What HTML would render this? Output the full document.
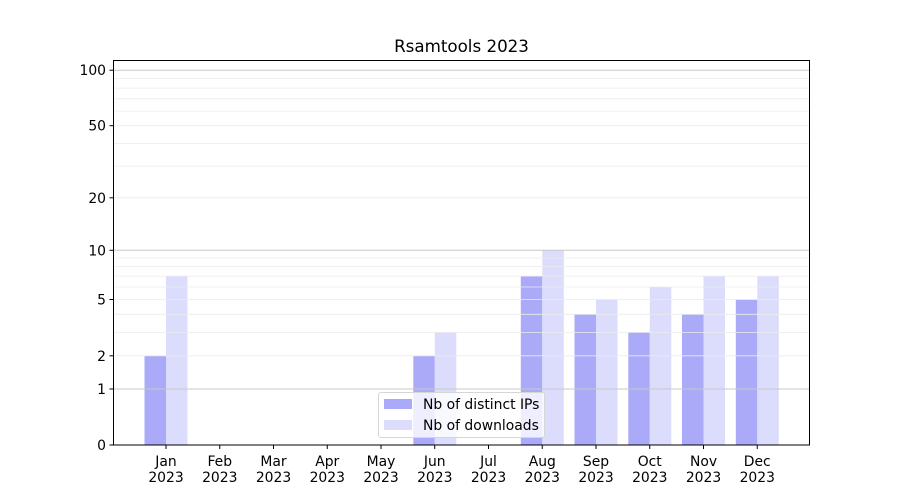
<!DOCTYPE html>
<html><head><meta charset="utf-8"><style>
html,body{margin:0;padding:0;background:#fff;}
svg{display:block;font-family:"DejaVu Sans","Liberation Sans",sans-serif;}
</style></head><body>
<svg width="900" height="500" viewBox="0 0 900 500" xmlns="http://www.w3.org/2000/svg">
<rect width="900" height="500" fill="#fff"/>
<!-- bars -->
<g>
<rect x="144.5" y="355.8" width="21.5" height="89.2" fill="#aaaaf9"/>
<rect x="166" y="276.1" width="21.5" height="168.9" fill="#dcdcfc"/>
<rect x="413.3" y="355.8" width="21.5" height="89.2" fill="#aaaaf9"/>
<rect x="434.8" y="332.4" width="21.5" height="112.6" fill="#dcdcfc"/>
<rect x="520.8" y="276.1" width="21.5" height="168.9" fill="#aaaaf9"/>
<rect x="542.3" y="250.3" width="21.5" height="194.7" fill="#dcdcfc"/>
<rect x="574.5" y="314.3" width="21.5" height="130.7" fill="#aaaaf9"/>
<rect x="596" y="299.5" width="21.5" height="145.5" fill="#dcdcfc"/>
<rect x="628.3" y="332.4" width="21.5" height="112.6" fill="#aaaaf9"/>
<rect x="649.8" y="287" width="21.5" height="158" fill="#dcdcfc"/>
<rect x="682" y="314.3" width="21.5" height="130.7" fill="#aaaaf9"/>
<rect x="703.5" y="276.1" width="21.5" height="168.9" fill="#dcdcfc"/>
<rect x="735.8" y="299.5" width="21.5" height="145.5" fill="#aaaaf9"/>
<rect x="757.3" y="276.1" width="21.5" height="168.9" fill="#dcdcfc"/>
</g>
<!-- minor grid -->
<g stroke="#ebebeb" stroke-width="0.8">
<line x1="113" x2="810" y1="355.8" y2="355.8"/>
<line x1="113" x2="810" y1="332.4" y2="332.4"/>
<line x1="113" x2="810" y1="314.3" y2="314.3"/>
<line x1="113" x2="810" y1="299.5" y2="299.5"/>
<line x1="113" x2="810" y1="287" y2="287"/>
<line x1="113" x2="810" y1="276.1" y2="276.1"/>
<line x1="113" x2="810" y1="266.6" y2="266.6"/>
<line x1="113" x2="810" y1="258" y2="258"/>
<line x1="113" x2="810" y1="197.8" y2="197.8"/>
<line x1="113" x2="810" y1="166.1" y2="166.1"/>
<line x1="113" x2="810" y1="143.4" y2="143.4"/>
<line x1="113" x2="810" y1="125.7" y2="125.7"/>
<line x1="113" x2="810" y1="111.1" y2="111.1"/>
<line x1="113" x2="810" y1="98.8" y2="98.8"/>
<line x1="113" x2="810" y1="88.1" y2="88.1"/>
<line x1="113" x2="810" y1="78.6" y2="78.6"/>
</g>
<!-- major grid -->
<g stroke="#c8c8c8" stroke-width="1">
<line x1="113" x2="810" y1="389" y2="389"/>
<line x1="113" x2="810" y1="250.3" y2="250.3"/>
<line x1="113" x2="810" y1="70.2" y2="70.2"/>
</g>
<!-- axes -->
<rect x="113.5" y="60.5" width="696" height="384.5" fill="none" stroke="#000" stroke-width="1"/>
<!-- y ticks -->
<g stroke="#000" stroke-width="1">
<line x1="109.5" x2="113" y1="445" y2="445"/>
<line x1="109.5" x2="113" y1="389" y2="389"/>
<line x1="109.5" x2="113" y1="355.8" y2="355.8"/>
<line x1="109.5" x2="113" y1="299.5" y2="299.5"/>
<line x1="109.5" x2="113" y1="250.3" y2="250.3"/>
<line x1="109.5" x2="113" y1="197.8" y2="197.8"/>
<line x1="109.5" x2="113" y1="125.7" y2="125.7"/>
<line x1="109.5" x2="113" y1="70.2" y2="70.2"/>
</g>
<g font-size="13.9" fill="#000" text-anchor="end">
<text x="106" y="450">0</text>
<text x="106" y="394">1</text>
<text x="106" y="361">2</text>
<text x="106" y="304.5">5</text>
<text x="106" y="255.3">10</text>
<text x="106" y="202.8">20</text>
<text x="106" y="130.7">50</text>
<text x="106" y="75.2">100</text>
</g>
<!-- x ticks -->
<g stroke="#000" stroke-width="1">
<line x1="166" x2="166" y1="445" y2="449"/>
<line x1="219.75" x2="219.75" y1="445" y2="449"/>
<line x1="273.5" x2="273.5" y1="445" y2="449"/>
<line x1="327.25" x2="327.25" y1="445" y2="449"/>
<line x1="381" x2="381" y1="445" y2="449"/>
<line x1="434.75" x2="434.75" y1="445" y2="449"/>
<line x1="488.5" x2="488.5" y1="445" y2="449"/>
<line x1="542.25" x2="542.25" y1="445" y2="449"/>
<line x1="596" x2="596" y1="445" y2="449"/>
<line x1="649.75" x2="649.75" y1="445" y2="449"/>
<line x1="703.5" x2="703.5" y1="445" y2="449"/>
<line x1="757.25" x2="757.25" y1="445" y2="449"/>
</g>
<g font-size="13.9" fill="#000" text-anchor="middle">
<text x="166" y="466">Jan</text><text x="166" y="482">2023</text>
<text x="219.75" y="466">Feb</text><text x="219.75" y="482">2023</text>
<text x="273.5" y="466">Mar</text><text x="273.5" y="482">2023</text>
<text x="327.25" y="466">Apr</text><text x="327.25" y="482">2023</text>
<text x="381" y="466">May</text><text x="381" y="482">2023</text>
<text x="434.75" y="466">Jun</text><text x="434.75" y="482">2023</text>
<text x="488.5" y="466">Jul</text><text x="488.5" y="482">2023</text>
<text x="542.25" y="466">Aug</text><text x="542.25" y="482">2023</text>
<text x="596" y="466">Sep</text><text x="596" y="482">2023</text>
<text x="649.75" y="466">Oct</text><text x="649.75" y="482">2023</text>
<text x="703.5" y="466">Nov</text><text x="703.5" y="482">2023</text>
<text x="757.25" y="466">Dec</text><text x="757.25" y="482">2023</text>
</g>
<!-- title -->
<text x="461.5" y="52" font-size="16.7" text-anchor="middle" fill="#000">Rsamtools 2023</text>
<!-- legend -->
<rect x="378.5" y="392.5" width="166" height="45" rx="2.5" fill="#fff" fill-opacity="0.8" stroke="#d6d6d6" stroke-width="1"/>
<rect x="384" y="399" width="28" height="10" fill="#aaaaf9"/>
<rect x="384" y="420" width="28" height="10" fill="#dcdcfc"/>
<g font-size="13.9" fill="#000">
<text x="423" y="409">Nb of distinct IPs</text>
<text x="423" y="430">Nb of downloads</text>
</g>
</svg>
</body></html>
